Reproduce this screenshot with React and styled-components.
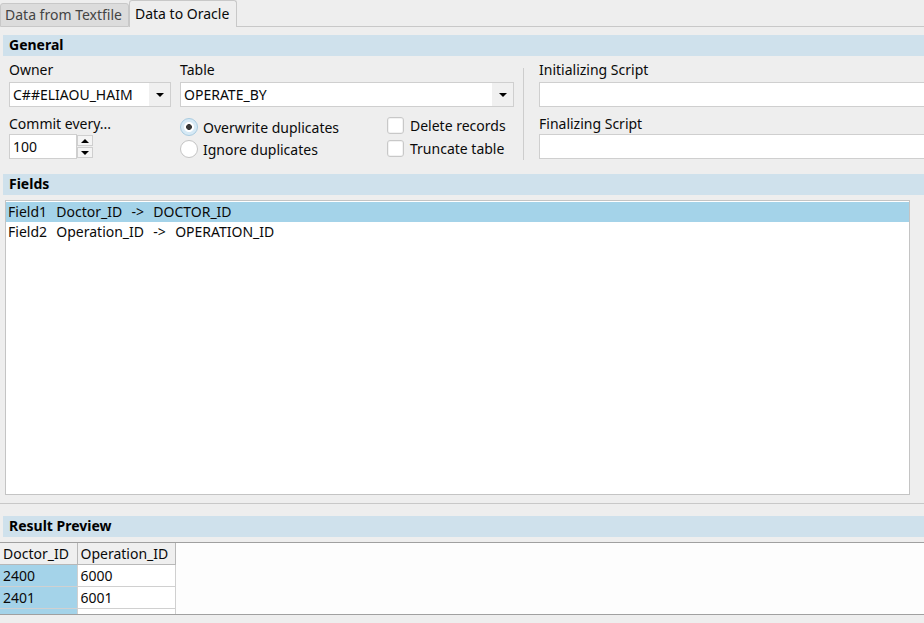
import React from 'react';
import styled, { createGlobalStyle } from 'styled-components';

const GlobalStyle = createGlobalStyle`
  html, body {
    margin: 0;
    padding: 0;
    background: #eeeeee;
  }
  body {
    font-family: "Noto Sans", "Open Sans", sans-serif;
    font-size: 13px;
    color: #0a0a0a;
  }
`

const Page = styled.div`
  width: 924px;
  height: 623px;
  overflow: hidden;
  background: #eeeeee;
  display: flex;
  flex-direction: column;
`

const TabBar = styled.div`
  height: 27px;
  display: flex;
  align-items: flex-end;
  box-sizing: border-box;

  &::after {
    content: '';
    flex: 1;
    height: 0;
    border-bottom: 1px solid #c8c8c8;
  }
`

const Tab = styled.div`
  box-sizing: border-box;
  height: ${({ $active }) => ($active ? '27px' : '24px')};
  padding: 0 ${({ $active }) => ($active ? '7px' : '6px')} 1px ${({ $active }) => ($active ? '5px' : '4px')};
  display: flex;
  align-items: center;
  background: ${({ $active }) => ($active ? '#eeeeee' : '#dcdcdc')};
  border: 1px solid #c8c8c8;
  border-bottom: ${({ $active }) => ($active ? 'none' : '1px solid #c8c8c8')};
  border-radius: 3px 3px 0 0;
  color: ${({ $active }) => ($active ? '#0a0a0a' : '#444')};
  font-size: 14px;
  white-space: nowrap;
`

const SectionHeader = styled.div`
  height: 21px;
  margin: ${({ $top }) => $top}px 0 0 3px;
  padding-left: 6px;
  background: #cfe1ec;
  font-weight: 700;
  font-size: 14px;
  line-height: 20px;
  color: #000;
`

const GeneralBody = styled.div`
  display: flex;
  padding: 6px 0 0 9px;
  height: 112px;
  box-sizing: border-box;
`

const Column = styled.div`
  display: flex;
  flex-direction: column;
  width: ${({ $w }) => $w}px;
  flex-shrink: 0;
`

const Label = styled.div`
  height: 20px;
  line-height: ${({ $lh }) => $lh || 20}px;
  margin-top: ${({ $top }) => $top || 0}px;
  font-size: 14px;
  white-space: nowrap;
`

const InputBox = styled.div`
  box-sizing: border-box;
  height: 25px;
  width: ${({ $w }) => ($w ? `${$w}px` : 'auto')};
  background: #fff;
  border: 1px solid #cfcfcf;
  display: flex;
  align-items: stretch;
  font-size: 14px;
`

const InputText = styled.span`
  flex: 1;
  padding-left: 3px;
  line-height: 23px;
  white-space: nowrap;
`

const ComboButton = styled.span`
  width: 21px;
  background: #f0f0f0;
  display: flex;
  align-items: center;
  justify-content: center;
`

const Triangle = styled.span`
  width: 0;
  height: 0;
  border-left: ${({ $s }) => $s}px solid transparent;
  border-right: ${({ $s }) => $s}px solid transparent;
  ${({ $up, $s }) =>
    $up
      ? `border-bottom: ${$s}px solid #000;`
      : `border-top: ${$s}px solid #000;`}
`

const SpinRow = styled.div`
  display: flex;
  align-items: stretch;
`

const SpinButtons = styled.div`
  display: flex;
  flex-direction: column;
  gap: 1px;
  width: 16px;
  height: 25px;
  padding: 1px 0;
  box-sizing: border-box;
`

const SpinButton = styled.span`
  flex: 1;
  background: #f4f4f4;
  border: 1px solid #cfcfcf;
  display: flex;
  align-items: center;
  justify-content: center;
`

const OptionRow = styled.div`
  display: flex;
  margin-top: 7px;
`

const RadioGroup = styled.div`
  width: 207px;
  display: flex;
  flex-direction: column;
  padding-top: 2px;
`

const CheckGroup = styled.div`
  display: flex;
  flex-direction: column;
`

const Option = styled.div`
  display: flex;
  align-items: center;
  height: ${({ $h }) => $h}px;
  gap: 5px;
  font-size: 14px;
  white-space: nowrap;
`

const Radio = styled.span`
  box-sizing: border-box;
  width: 18px;
  height: 18px;
  border-radius: 50%;
  border: 1px solid ${({ $on }) => ($on ? '#a8cbe0' : '#c4c4c4')};
  background: ${({ $on }) =>
    $on
      ? 'radial-gradient(circle, #3a3a3a 0 2.6px, #ffffff 3.2px 4.6px, #d6e9f5 5.4px)'
      : '#fff'};
  flex-shrink: 0;
`

const Checkbox = styled.span`
  box-sizing: border-box;
  width: 17px;
  height: 17px;
  margin-right: 1px;
  border-radius: 3px;
  border: 1px solid #c8c8c8;
  background: #fff;
  box-shadow: inset 0 0 0 1px #f2f2f2;
  flex-shrink: 0;
`

const Separator = styled.div`
  width: 1px;
  height: 92px;
  margin: 6px 15px 0 9px;
  background: #cdcdcd;
  flex-shrink: 0;
`

const RightColumn = styled.div`
  display: flex;
  flex-direction: column;
  flex: 1;
  margin-right: -20px;
`

const FieldsArea = styled.div`
  display: flex;
  padding: 5px 0 0 5px;
`

const FieldList = styled.div`
  box-sizing: border-box;
  width: 905px;
  height: 295px;
  background: #fff;
  border: 1px solid #c4c4c4;
  padding: 1px 0;
`

const FieldRow = styled.div`
  height: 20px;
  line-height: 20px;
  padding-left: 2px;
  font-size: 14px;
  white-space: pre;
  word-spacing: 1px;
  background: ${({ $selected }) => ($selected ? '#a4d3e9' : 'transparent')};
`

const Sash = styled.div`
  margin-top: 8px;
  height: 1px;
  background: #c8c8c8;
`

const PreviewBox = styled.div`
  margin-top: 5px;
  height: 73px;
  box-sizing: border-box;
  background: #fdfdfd;
  border-top: 1px solid #a0a0a0;
  border-bottom: 1px solid #a0a0a0;
  overflow: hidden;
`

const Grid = styled.table`
  border-collapse: collapse;
  font-size: 14px;
`

const HeadCell = styled.th`
  height: 21px;
  padding: 0 3px;
  font-weight: 400;
  text-align: left;
  background: #efefef;
  border: 1px solid #b8b8b8;
  border-top: none;
  border-left: ${({ $first }) => ($first ? 'none' : '1px solid #b8b8b8')};
  box-sizing: border-box;
  white-space: nowrap;
`

const Cell = styled.td`
  height: 22px;
  padding: 0 3px;
  box-sizing: border-box;
  width: ${({ $w }) => $w}px;
  background: ${({ $selected }) => ($selected ? '#a4d3e9' : '#fff')};
  border: 1px solid #d0d0d0;
  border-left: ${({ $first }) => ($first ? 'none' : '1px solid #d0d0d0')};
`

const fields = [
  'Field1  Doctor_ID  ->  DOCTOR_ID',
  'Field2  Operation_ID  ->  OPERATION_ID',
];

const rows = [
  ['2400', '6000'],
  ['2401', '6001'],
  ['', ''],
];

export default function App() {
  return (
    <>
      <GlobalStyle />
      <Page>
        <TabBar>
          <Tab>Data from Textfile</Tab>
          <Tab $active>Data to Oracle</Tab>
        </TabBar>

        <SectionHeader $top={8}>General</SectionHeader>
        <GeneralBody>
          <Column $w={171}>
            <Label $lh={16}>Owner</Label>
            <InputBox $w={162}>
              <InputText>C##ELIAOU_HAIM</InputText>
              <ComboButton><Triangle $s={4} /></ComboButton>
            </InputBox>
            <Label $top={7}>Commit every...</Label>
            <SpinRow>
              <InputBox $w={68}>
                <InputText>100</InputText>
              </InputBox>
              <SpinButtons>
                <SpinButton><Triangle $s={4} $up /></SpinButton>
                <SpinButton><Triangle $s={4} /></SpinButton>
              </SpinButtons>
            </SpinRow>
          </Column>

          <Column $w={334}>
            <Label $lh={16}>Table</Label>
            <InputBox>
              <InputText>OPERATE_BY</InputText>
              <ComboButton><Triangle $s={4} /></ComboButton>
            </InputBox>
            <OptionRow>
              <RadioGroup>
                <Option $h={22}><Radio $on />Overwrite duplicates</Option>
                <Option $h={22}><Radio />Ignore duplicates</Option>
              </RadioGroup>
              <CheckGroup>
                <Option $h={23}><Checkbox />Delete records</Option>
                <Option $h={23}><Checkbox />Truncate table</Option>
              </CheckGroup>
            </OptionRow>
          </Column>

          <Separator />

          <RightColumn>
            <Label $lh={16}>Initializing Script</Label>
            <InputBox />
            <Label $top={7}>Finalizing Script</Label>
            <InputBox />
          </RightColumn>
        </GeneralBody>

        <SectionHeader $top={6}>Fields</SectionHeader>
        <FieldsArea>
          <FieldList>
            {fields.map((f, i) => (
              <FieldRow key={f} $selected={i === 0}>{f}</FieldRow>
            ))}
          </FieldList>
        </FieldsArea>

        <Sash />
        <SectionHeader $top={12}>Result Preview</SectionHeader>
        <PreviewBox>
          <Grid>
            <thead>
              <tr>
                <HeadCell $first>Doctor_ID</HeadCell>
                <HeadCell>Operation_ID</HeadCell>
              </tr>
            </thead>
            <tbody>
              {rows.map((r, i) => (
                <tr key={i}>
                  <Cell $first $selected $w={77}>{r[0]}</Cell>
                  <Cell $w={98}>{r[1]}</Cell>
                </tr>
              ))}
            </tbody>
          </Grid>
        </PreviewBox>
      </Page>
    </>
  );
}
